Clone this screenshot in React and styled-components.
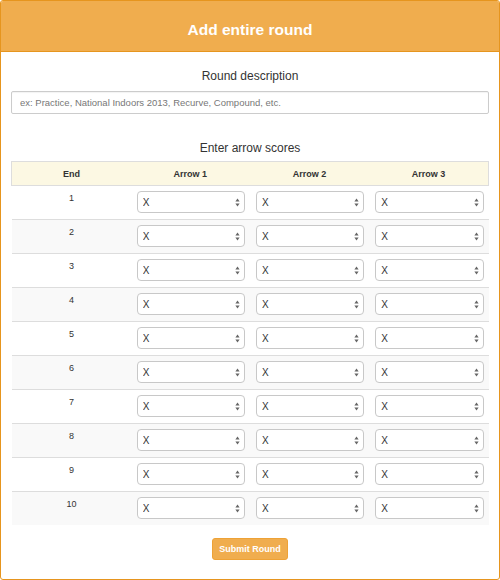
import React from 'react';
import styled, { createGlobalStyle } from 'styled-components';

const GlobalStyle = createGlobalStyle`
    html, body {
        margin: 0;
        padding: 0;
        background: #fff;
    }
    body {
        font-family: "Liberation Sans", Arial, Helvetica, sans-serif;
        color: #333;
    }
    * {
        box-sizing: border-box;
    }
`;

const Panel = styled.div`
    width: 500px;
    height: 580px;
    border: 1px solid #e6951e;
    border-radius: 3px;
    overflow: hidden;
    display: flex;
    flex-direction: column;
`;

const PanelHeading = styled.div`
    height: 51px;
    background-color: #f0ad4e;
    border-bottom: 1px solid #e6951e;
    display: flex;
    align-items: center;
    justify-content: center;
    padding-top: 8px;

    h1 {
        margin: 0;
        color: #fff;
        font-size: 15.5px;
        font-weight: bold;
    }
`;

const PanelBody = styled.div`
    padding: 16px 10px 0;
    display: flex;
    flex-direction: column;
`;

const SectionTitle = styled.h2`
    margin: 0;
    text-align: center;
    font-size: 12px;
    line-height: 17px;
    font-weight: normal;
    color: #333;
    margin-top: ${p => p.gap || 0}px;
`;

const TextInput = styled.input`
    margin-top: 6px;
    height: 23px;
    width: 100%;
    border: 1px solid #ccc;
    border-radius: 2px;
    padding: 0 8px;
    font-family: inherit;
    font-size: 9.5px;
    color: #555;
    box-shadow: inset 0 1px 1px rgba(0,0,0,.05);

    &::placeholder {
        color: #777;
    }
`;

const ScoreTable = styled.table`
    margin-top: 4px;
    width: 100%;
    border-collapse: collapse;
    table-layout: fixed;

    th {
        height: 24px;
        background-color: #fcf8e3;
        border-top: 1px solid #ddd;
        border-bottom: 1px solid #ddd;
        font-size: 9px;
        font-weight: bold;
        text-align: center;
        color: #333;
        padding: 0;
    }

    th:first-child {
        border-left: 1px solid #ddd;
    }

    th:last-child {
        border-right: 1px solid #ddd;
    }

    tbody tr:nth-child(even) {
        background-color: #f9f9f9;
    }

    td {
        border-top: 1px solid #ddd;
        padding: 5px 5px 6px 6px;
        vertical-align: top;
        font-size: 9px;
        line-height: 13px;
    }
`;

const EndCell = styled.td`
    text-align: center;
    && {
        padding-top: 6px;
    }
`;

const SelectWrap = styled.div`
    position: relative;
    height: 22px;
`;

const Select = styled.select`
    appearance: none;
    -webkit-appearance: none;
    width: 100%;
    height: 22px;
    background: #fff;
    border: 1px solid #c8c8c8;
    border-radius: 4px;
    padding: 0 5px;
    font-family: inherit;
    font-size: 10px;
    color: #333;
`;

const Caret = styled.svg`
    position: absolute;
    right: 5px;
    top: 7px;
    pointer-events: none;
`;

const Footer = styled.div`
    display: flex;
    justify-content: center;
    margin-top: 13px;
`;

const SubmitButton = styled.button`
    width: 76px;
    height: 22px;
    background-color: #f0ad4e;
    border: 1px solid #eea236;
    border-radius: 3px;
    color: #fff;
    font-family: inherit;
    font-size: 9px;
    font-weight: bold;
    padding: 0;
`;

const ArrowSelect = () => (
    <SelectWrap>
        <Select defaultValue="X">
            <option>X</option>
            {[10, 9, 8, 7, 6, 5, 4, 3, 2, 1, 'M'].map(v => <option key={v}>{v}</option>)}
        </Select>
        <Caret width="5" height="9" viewBox="0 0 5 9">
            <path d="M2.5 0.5 L4.6 3.6 L0.4 3.6 Z" fill="#666" />
            <path d="M2.5 8.5 L4.6 5.4 L0.4 5.4 Z" fill="#666" />
        </Caret>
    </SelectWrap>
);

const ends = [1, 2, 3, 4, 5, 6, 7, 8, 9, 10];

const App = () => {
    return (
        <>
            <GlobalStyle />
            <Panel>
                <PanelHeading>
                    <h1>Add entire round</h1>
                </PanelHeading>
                <PanelBody>
                    <SectionTitle>Round description</SectionTitle>
                    <TextInput placeholder="ex: Practice, National Indoors 2013, Recurve, Compound, etc." />
                    <SectionTitle gap={26}>Enter arrow scores</SectionTitle>
                    <ScoreTable>
                        <thead>
                            <tr>
                                <th>End</th>
                                <th>Arrow 1</th>
                                <th>Arrow 2</th>
                                <th>Arrow 3</th>
                            </tr>
                        </thead>
                        <tbody>
                            {ends.map(end => (
                                <tr key={end}>
                                    <EndCell>{end}</EndCell>
                                    <td><ArrowSelect /></td>
                                    <td><ArrowSelect /></td>
                                    <td><ArrowSelect /></td>
                                </tr>
                            ))}
                        </tbody>
                    </ScoreTable>
                    <Footer>
                        <SubmitButton>Submit Round</SubmitButton>
                    </Footer>
                </PanelBody>
            </Panel>
        </>
    );
}

export default App;
